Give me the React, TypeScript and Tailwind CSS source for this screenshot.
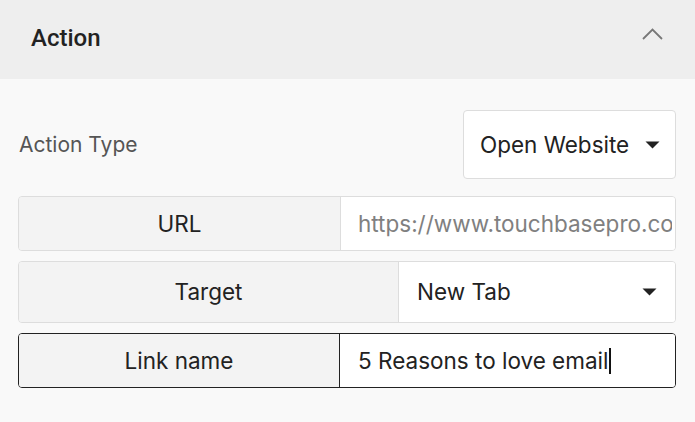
import React from "react";

const Caret = () => (
  <svg width="15" height="8" viewBox="0 0 15 8" className="shrink-0">
    <path d="M0.5 0.5 L14.5 0.5 L7.5 7.5 Z" fill="#222" />
  </svg>
);

export default function App() {
  return (
    <div className="w-[695px] h-[422px] bg-[#f9f9f9] overflow-hidden" style={{ fontFamily: "Inter, 'Noto Sans', sans-serif" }}>
      <div className="h-[79px] bg-[#eeeeee] flex items-center justify-between pl-[31px] pr-[32px]">
        <span className="text-[24px] font-medium text-[#222] mt-[-4px]" style={{ fontFamily: "Roboto, sans-serif" }}>Action</span>
        <svg width="21" height="12" viewBox="0 0 21 12" className="mb-[12px]">
          <path d="M1 11 L10.5 1.5 L20 11" stroke="#777" strokeWidth="1.8" fill="none" />
        </svg>
      </div>
      <div className="pl-[18px] pr-[19px] pt-[31px]">
        <div className="flex items-center justify-between">
          <span className="text-[21px] text-[#555] pl-[1px]">Action Type</span>
          <div className="w-[213px] h-[69px] bg-white border border-[#dddddd] rounded-[4px] flex items-center pl-[16px] pr-[15px] justify-between">
            <span className="text-[22.5px] text-[#222]">Open Website</span>
            <Caret />
          </div>
        </div>
        <div className="mt-[17px] flex h-[55px] border border-[#dddddd] rounded-[4px] overflow-hidden">
          <div className="w-[322px] shrink-0 bg-[#f3f3f3] border-r border-[#dddddd] flex items-center justify-center text-[22.5px] text-[#222]">URL</div>
          <div className="flex-1 min-w-0 bg-white flex items-center pl-[17px] pr-[3px]">
            <div className="w-full overflow-hidden whitespace-nowrap text-[22.5px] text-[#808080]">https://www.touchbasepro.com</div>
          </div>
        </div>
        <div className="mt-[10px] flex h-[62px] border border-[#dddddd] rounded-[4px] overflow-hidden">
          <div className="w-[380px] shrink-0 bg-[#f3f3f3] border-r border-[#dddddd] flex items-center justify-center text-[22.5px] text-[#222]">Target</div>
          <div className="flex-1 bg-white flex items-center justify-between pl-[18px] pr-[18px] text-[22.5px] text-[#222]">
            <span>New Tab</span>
            <Caret />
          </div>
        </div>
        <div className="mt-[10px] flex h-[55px] border border-[#222] rounded-[4px] overflow-hidden">
          <div className="w-[321px] shrink-0 bg-[#f3f3f3] border-r border-[#222] flex items-center justify-center text-[22.5px] text-[#222]">Link name</div>
          <div className="flex-1 bg-white flex items-center pl-[18px] text-[22.5px] text-[#222] whitespace-nowrap">
            <span>5 Reasons to love email</span>
            <span className="inline-block w-[2px] h-[26px] bg-[#111] ml-[1px]" />
          </div>
        </div>
      </div>
    </div>
  );
}
